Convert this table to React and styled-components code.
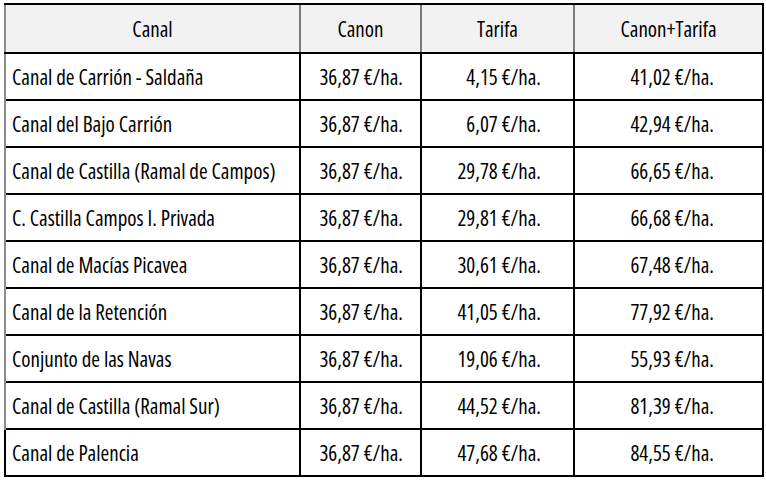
import React from "react";
import styled, { createGlobalStyle } from "styled-components";

const GlobalStyle = createGlobalStyle`
  html, body {
    margin: 0;
    padding: 0;
    background: #ffffff;
  }
`;

const rows = [
  ["Canal de Carrión - Saldaña", "36,87 €/ha.", "4,15 €/ha.", "41,02 €/ha."],
  ["Canal del Bajo Carrión", "36,87 €/ha.", "6,07 €/ha.", "42,94 €/ha."],
  ["Canal de Castilla (Ramal de Campos)", "36,87 €/ha.", "29,78 €/ha.", "66,65 €/ha."],
  ["C. Castilla Campos I. Privada", "36,87 €/ha.", "29,81 €/ha.", "66,68 €/ha."],
  ["Canal de Macías Picavea", "36,87 €/ha.", "30,61 €/ha.", "67,48 €/ha."],
  ["Canal de la Retención", "36,87 €/ha.", "41,05 €/ha.", "77,92 €/ha."],
  ["Conjunto de las Navas", "36,87 €/ha.", "19,06 €/ha.", "55,93 €/ha."],
  ["Canal de Castilla (Ramal Sur)", "36,87 €/ha.", "44,52 €/ha.", "81,39 €/ha."],
  ["Canal de Palencia", "36,87 €/ha.", "47,68 €/ha.", "84,55 €/ha."],
];

const pads = [0, 17, 32, 48];

function App() {
  return (
    <>
      <GlobalStyle />
      <Wrap>
        <Table>
          <colgroup>
            <col style={{ width: 295 }} />
            <col style={{ width: 121 }} />
            <col style={{ width: 153 }} />
            <col style={{ width: 189 }} />
          </colgroup>
          <thead>
            <tr>
              <Head $first>Canal</Head>
              <Head>Canon</Head>
              <Head>Tarifa</Head>
              <Head $last>Canon+Tarifa</Head>
            </tr>
          </thead>
          <tbody>
            {rows.map((r, i) => (
              <Row key={i} $lastRow={i === rows.length - 1}>
                <NameCell>{r[0]}</NameCell>
                {r.slice(1).map((v, j) => (
                  <ValueCell key={j} $pad={pads[j + 1]} $last={j === 2}>
                    {v}
                  </ValueCell>
                ))}
              </Row>
            ))}
          </tbody>
        </Table>
      </Wrap>
    </>
  );
}

export default App;

const Wrap = styled.div`
  padding: 3px 0 0 4px;
  font-family: "Open Sans", "Noto Sans", sans-serif;
  color: #000;
`;

const Table = styled.table`
  border-collapse: collapse;
  table-layout: fixed;
  width: 759px;
  font-size: 21px;
  font-weight: 450;
  font-stretch: 75%;
`;

const Head = styled.th`
  height: 47px;
  padding: 0;
  font-weight: 450;
  font-stretch: 75%;
  background: #f2f2f2;
  text-align: center;
  border-top: 2px solid #000;
  border-bottom: 2px solid #000;
  border-left: ${(p) => (p.$first ? "2px solid #8c8c8c" : "2px solid #7a7a7a")};
  border-right: ${(p) => (p.$last ? "2px solid #000" : "none")};
`;

const Row = styled.tr`
  height: 47px;
  border-bottom: 2px solid #000;
  & > td:first-child {
    border-left: 2px solid ${(p) => (p.$lastRow ? "#000" : "#8c8c8c")};
  }
`;

const NameCell = styled.td`
  padding: 0 0 0 6px;
  white-space: nowrap;
`;

const ValueCell = styled.td`
  padding: 0 ${(p) => p.$pad}px 0 0;
  text-align: right;
  white-space: nowrap;
  border-left: 2px solid #000;
  border-right: ${(p) => (p.$last ? "2px solid #000" : "none")};
`;
